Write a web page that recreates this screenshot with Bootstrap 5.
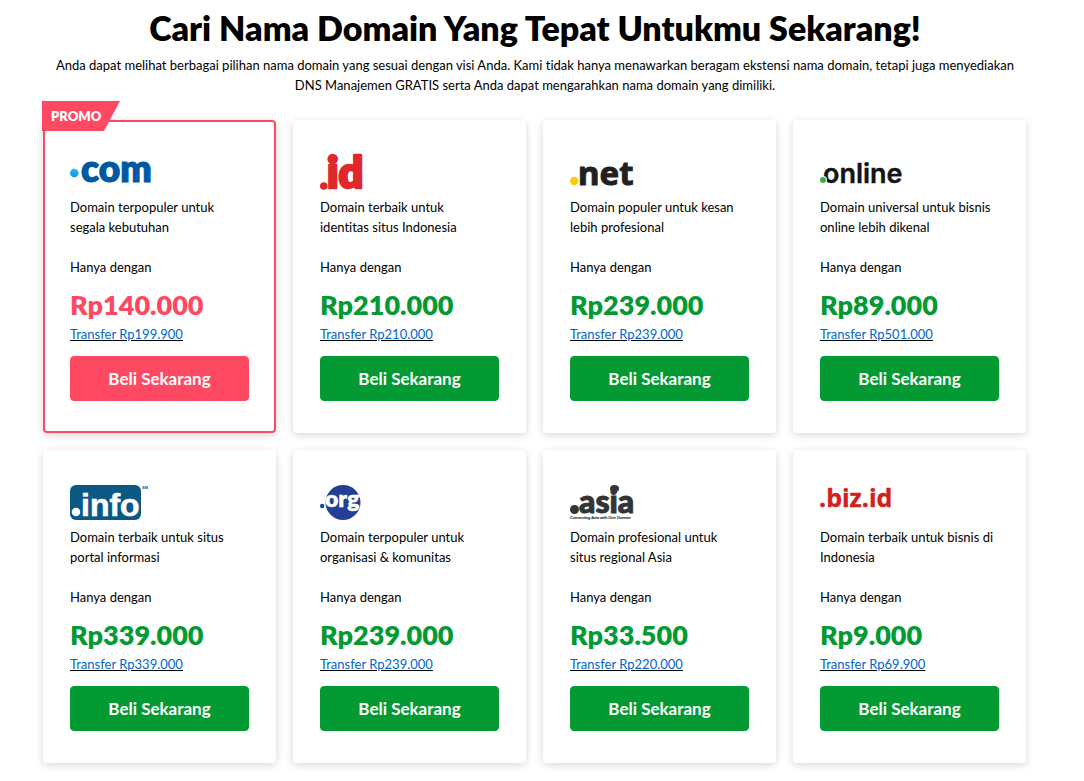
<!DOCTYPE html>
<html lang="id">
<head>
<meta charset="utf-8">
<meta name="viewport" content="width=device-width, initial-scale=1">
<title>Cari Nama Domain</title>
<link rel="stylesheet" href="https://cdn.jsdelivr.net/npm/bootstrap@5.3.0/dist/css/bootstrap.min.css">
<style>
body{font-family:Lato,sans-serif;font-size:13px;line-height:20px;color:#000;padding-right:14px;font-variant-ligatures:none}
.domain-wrap{max-width:1000px}
.domain-title{font-size:34px;line-height:44px;font-weight:800;padding-top:6px}
.domain-intro{padding:5px 8px 25px}
.plan-col{padding:0 9px 17px 8px}
.plan{padding:35px 27px 32px;border-radius:4px;background:#fff;box-shadow:0 2px 8px rgba(0,0,0,.16)}
.plan-promo{border:2px solid #ff4963;padding:33px 25px 30px}
.ribbon{top:-21px;left:-3px;width:78px;height:30px;line-height:30px;padding-left:9px;background:#ff4963;color:#fff;font-weight:800;clip-path:polygon(0 0,100% 0,62px 100%,0 100%)}
.plan-logo{display:block;height:35px;margin-bottom:7px;overflow:visible}
.price{font-size:27px;line-height:36px;font-weight:800;margin:10px 0 1px;color:#039a33}
.plan-promo .price{color:#ff4963}
.transfer{color:#06c;text-decoration-color:#000}
.btn-buy{--bs-btn-color:#fff;--bs-btn-bg:#039a33;--bs-btn-border-color:#039a33;--bs-btn-hover-color:#fff;--bs-btn-hover-bg:#027f2a;--bs-btn-font-size:17px;--bs-btn-font-weight:700;--bs-btn-line-height:20px;--bs-btn-border-radius:4px;height:45px;margin-top:12px}
.plan-promo .btn-buy{--bs-btn-bg:#ff4963;--bs-btn-border-color:#ff4963;--bs-btn-hover-bg:#e93c56}
</style>
</head>
<body>
<main class="domain-wrap mx-auto">
<header class="text-center px-2">
<h1 class="domain-title mb-0">Cari Nama Domain Yang Tepat Untukmu Sekarang!</h1>
<p class="domain-intro mb-0">Anda dapat melihat berbagai pilihan nama domain yang sesuai dengan visi Anda. Kami tidak hanya menawarkan beragam ekstensi nama domain, tetapi juga menyediakan DNS Manajemen GRATIS serta Anda dapat mengarahkan nama domain yang dimiliki.</p>
</header>
<section class="row g-0">
<div class="col-12 col-sm-6 col-md-3 plan-col"><article class="plan plan-promo position-relative h-100">
<span class="ribbon position-absolute">PROMO</span>
<svg class="plan-logo" width="100" height="35"><defs><linearGradient id="dot" x2="0" y2="1"><stop stop-color="#20c4f4"/><stop offset="1" stop-color="#1590e0"/></linearGradient></defs><circle cx="4.300" cy="18" r="4.300" fill="url(#dot)"/><text x="11" y="27" font-family="Lato" font-weight="800" font-size="37" fill="#0058a3" stroke="#0058a3" stroke-width="1">com</text></svg>
<p class="mb-0 pe-1">Domain terpopuler untuk segala kebutuhan</p><p class="mb-0 mt-3 pt-1">Hanya dengan</p>
<p class="price">Rp140.000</p><a class="transfer" href="#">Transfer Rp199.900</a>
<button type="button" class="btn btn-buy w-100">Beli Sekarang</button></article></div>

<div class="col-12 col-sm-6 col-md-3 plan-col"><article class="plan h-100">
<svg class="plan-logo" width="100" height="35"><circle cx="3.800" cy="31" r="3.800" fill="#e0282c"/><text x="7" y="33" font-family="Lato" font-weight="800" font-size="43" fill="#e0282c" stroke="#e0282c" stroke-width="2.500" stroke-linejoin="round">id</text></svg>
<p class="mb-0 pe-1">Domain terbaik untuk identitas situs Indonesia</p><p class="mb-0 mt-3 pt-1">Hanya dengan</p>
<p class="price">Rp210.000</p><a class="transfer" href="#">Transfer Rp210.000</a>
<button type="button" class="btn btn-buy w-100">Beli Sekarang</button></article></div>

<div class="col-12 col-sm-6 col-md-3 plan-col"><article class="plan h-100">
<svg class="plan-logo" width="100" height="35"><circle cx="4.200" cy="26" r="4.200" fill="#ffcb05"/><text x="8" y="30" font-family="Noto Sans" font-weight="700" font-size="33" fill="#231f20" stroke="#231f20" stroke-width="1" stroke-linejoin="round">net</text></svg>
<p class="mb-0 pe-1">Domain populer untuk kesan lebih profesional</p><p class="mb-0 mt-3 pt-1">Hanya dengan</p>
<p class="price">Rp239.000</p><a class="transfer" href="#">Transfer Rp239.000</a>
<button type="button" class="btn btn-buy w-100">Beli Sekarang</button></article></div>

<div class="col-12 col-sm-6 col-md-3 plan-col"><article class="plan h-100">
<svg class="plan-logo" width="100" height="35"><text x="3" y="28" font-family="Inter" font-weight="600" font-size="27" fill="#141414" stroke="#141414" stroke-width=".4">online</text><circle cx="3" cy="25" r="4" fill="#fff"/><circle cx="3" cy="25" r="3" fill="#3fae49"/></svg>
<p class="mb-0 pe-1">Domain universal untuk bisnis online lebih dikenal</p><p class="mb-0 mt-3 pt-1">Hanya dengan</p>
<p class="price">Rp89.000</p><a class="transfer" href="#">Transfer Rp501.000</a>
<button type="button" class="btn btn-buy w-100">Beli Sekarang</button></article></div>

<div class="col-12 col-sm-6 col-md-3 plan-col"><article class="plan h-100">
<svg class="plan-logo" width="100" height="35"><rect width="71" height="35" rx="6" fill="#0a5884"/><circle cx="6" cy="27" r="4.300" fill="#fff"/><text x="11" y="31" font-family="Liberation Sans" font-weight="700" font-size="32" fill="#fff" stroke="#fff" stroke-width=".6">info</text><text x="72" y="4" font-family="Liberation Sans" font-weight="700" font-size="4" fill="#0a5884">SM</text></svg>
<p class="mb-0 pe-1">Domain terbaik untuk situs portal informasi</p><p class="mb-0 mt-3 pt-1">Hanya dengan</p>
<p class="price">Rp339.000</p><a class="transfer" href="#">Transfer Rp339.000</a>
<button type="button" class="btn btn-buy w-100">Beli Sekarang</button></article></div>

<div class="col-12 col-sm-6 col-md-3 plan-col"><article class="plan h-100">
<svg class="plan-logo" width="100" height="35"><circle cx="23" cy="17.500" r="17.500" fill="#233f95"/><circle cx="2.200" cy="21" r="2.200" fill="#233f95"/><text x="5" y="22" font-family="Lato" font-weight="800" font-size="23" fill="#fff" stroke="#fff" stroke-width=".4">org</text></svg>
<p class="mb-0 pe-1">Domain terpopuler untuk organisasi &amp; komunitas</p><p class="mb-0 mt-3 pt-1">Hanya dengan</p>
<p class="price">Rp239.000</p><a class="transfer" href="#">Transfer Rp239.000</a>
<button type="button" class="btn btn-buy w-100">Beli Sekarang</button></article></div>

<div class="col-12 col-sm-6 col-md-3 plan-col"><article class="plan h-100">
<svg class="plan-logo" width="100" height="35"><circle cx="4.500" cy="24.500" r="4.500" fill="#333435"/><text x="9" y="28" font-family="Lato" font-weight="900" font-size="32" fill="#333435" stroke="#333435" stroke-width="1">asia</text><ellipse cx="44.500" cy="3.500" rx="4.500" ry="3.500" fill="#333435"/><text x="0" y="34" font-family="Liberation Sans" font-size="4" fill="#333435" stroke="#333435" stroke-width=".2">Connecting Asia with One Domain</text></svg>
<p class="mb-0 pe-1">Domain profesional untuk situs regional Asia</p><p class="mb-0 mt-3 pt-1">Hanya dengan</p>
<p class="price">Rp33.500</p><a class="transfer" href="#">Transfer Rp220.000</a>
<button type="button" class="btn btn-buy w-100">Beli Sekarang</button></article></div>

<div class="col-12 col-sm-6 col-md-3 plan-col"><article class="plan h-100">
<svg class="plan-logo" width="100" height="35"><text x="-1" y="22" font-family="Open Sans" font-weight="700" font-size="25" fill="#d3201c" stroke="#d3201c" stroke-width=".4">.biz.id</text></svg>
<p class="mb-0 pe-1">Domain terbaik untuk bisnis di Indonesia</p><p class="mb-0 mt-3 pt-1">Hanya dengan</p>
<p class="price">Rp9.000</p><a class="transfer" href="#">Transfer Rp69.900</a>
<button type="button" class="btn btn-buy w-100">Beli Sekarang</button></article></div>
</section>
</main>
<script src="https://cdn.jsdelivr.net/npm/bootstrap@5.3.0/dist/js/bootstrap.bundle.min.js"></script>
</body>
</html>
